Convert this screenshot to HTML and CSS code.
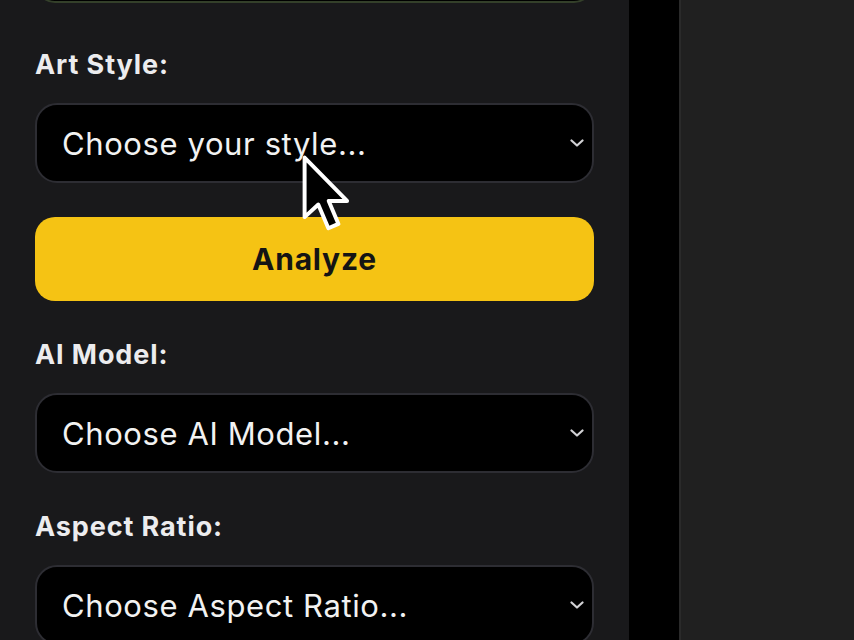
FILE: index.html
```html
<!DOCTYPE html>
<html lang="en">
<head>
    <meta charset="UTF-8">
    <meta name="viewport" content="width=device-width, initial-scale=1.0">
    <title>Art Analyzer</title>
    <link rel="stylesheet" href="styles.css">
</head>
<body>
    <div class="sidebar">
        <div class="prev-field"></div>

        <div class="field first">
            <label for="artStyle">Art Style:</label>
            <div class="select-wrap">
                <select id="artStyle">
                    <option value="" selected>Choose your style...</option>
                    <option value="impressionism">Impressionism</option>
                    <option value="cubism">Cubism</option>
                </select>
                <svg class="chevron" width="14" height="8" viewBox="0 0 14 8"><path d="M1.5 1.5 L7 6.5 L12.5 1.5" fill="none" stroke="#d2d2d5" stroke-width="2.2" stroke-linecap="round" stroke-linejoin="round"/></svg>
            </div>
        </div>

        <button class="analyze" type="button">Analyze</button>

        <div class="field">
            <label for="aiModel">AI Model:</label>
            <div class="select-wrap">
                <select id="aiModel">
                    <option value="" selected>Choose AI Model...</option>
                    <option value="a">Model A</option>
                </select>
                <svg class="chevron" width="14" height="8" viewBox="0 0 14 8"><path d="M1.5 1.5 L7 6.5 L12.5 1.5" fill="none" stroke="#d2d2d5" stroke-width="2.2" stroke-linecap="round" stroke-linejoin="round"/></svg>
            </div>
        </div>

        <div class="field">
            <label for="aspect">Aspect Ratio:</label>
            <div class="select-wrap">
                <select id="aspect">
                    <option value="" selected>Choose Aspect Ratio...</option>
                    <option value="1:1">1:1</option>
                </select>
                <svg class="chevron" width="14" height="8" viewBox="0 0 14 8"><path d="M1.5 1.5 L7 6.5 L12.5 1.5" fill="none" stroke="#d2d2d5" stroke-width="2.2" stroke-linecap="round" stroke-linejoin="round"/></svg>
            </div>
        </div>

        <!-- mouse pointer in the screenshot -->
        <svg class="cursor" width="54" height="83" viewBox="0 0 15 23"><path d="M1 1 L1 17.5 L4.8 14 L7.6 20.6 L10.4 19.4 L7.7 13 L12.8 13 Z" fill="#000" stroke="#fff" stroke-width="1.1" stroke-linejoin="round"/></svg>
    </div>
    <div class="divider"></div>
    <div class="main"></div>
</body>
</html>
```

FILE: styles.css
```css
html, body {
    height: 100%;
}

body {
    margin: 0;
    display: flex;
    overflow: hidden;
    background-color: #202020;
    font-family: Inter, "Liberation Sans", Arial, sans-serif;
    color: #ececee;
}

.sidebar {
    position: relative;
    width: 629px;
    flex-shrink: 0;
    box-sizing: border-box;
    padding: 0 35px;
    background-color: #19191b;
}

.prev-field {
    height: 40px;
    margin-top: -37px;
    box-sizing: border-box;
    border: 2px solid #34402a;
    border-radius: 22px;
    background-color: #000;
}

.field {
    margin-top: 37px;
}

.field.first {
    margin-top: 45px;
}

.field label {
    display: block;
    font-size: 27px;
    line-height: 34px;
    font-weight: 700;
    letter-spacing: 0.9px;
    color: #ececee;
}

.select-wrap {
    position: relative;
    margin-top: 21px;
}

.select-wrap select {
    display: block;
    width: 100%;
    height: 80px;
    box-sizing: border-box;
    padding: 0 60px 0 25px;
    border: 2px solid #2d2d33;
    border-radius: 22px;
    background-color: #000;
    color: #f2f2f2;
    font-family: inherit;
    font-size: 31px;
    letter-spacing: 0.6px;
    appearance: none;
    -webkit-appearance: none;
    outline: none;
}

.chevron {
    position: absolute;
    right: 10px;
    top: 36px;
    pointer-events: none;
}

.analyze {
    display: block;
    width: 100%;
    height: 84px;
    margin-top: 34px;
    border: none;
    border-radius: 20px;
    background-color: #f5c314;
    color: #141414;
    font-family: inherit;
    font-size: 30px;
    font-weight: 700;
    letter-spacing: 0.8px;
    cursor: pointer;
}

.cursor {
    position: absolute;
    left: 301px;
    top: 154px;
}

.divider {
    width: 50px;
    flex-shrink: 0;
    background-color: #000;
}

.main {
    flex: 1;
    background-color: #202020;
    border-left: 2px solid #2a2a2a;
}
```
